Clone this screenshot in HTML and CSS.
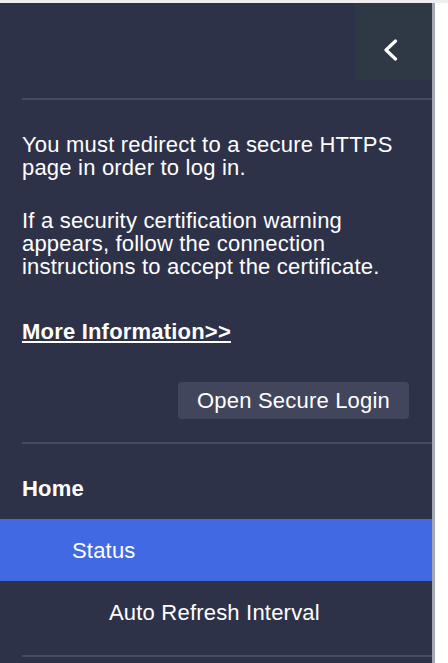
FILE: index.html
```html
<!DOCTYPE html>
<html lang="en">
<head>
<meta charset="utf-8">
<title>Menu</title>
<link rel="stylesheet" href="styles.css">
</head>
<body>
<div class="app">
  <aside class="panel">
    <div class="panel-head">
      <button class="back" aria-label="Collapse">
        <svg width="15" height="22" viewBox="0 0 15 22"><polyline points="12.5,2 3,11 12.5,20" fill="none" stroke="#ffffff" stroke-width="3.2" stroke-linecap="round" stroke-linejoin="round"/></svg>
      </button>
    </div>
    <hr class="divider">
    <div class="notice">
      <p class="p1">You must redirect to a secure HTTPS page in order to log in.</p>
      <p class="p2">If a security certification warning appears, follow the connection instructions to accept the certificate.</p>
      <a class="more" href="#">More Information&gt;&gt;</a>
      <div class="actions"><button class="btn">Open Secure Login</button></div>
    </div>
    <hr class="divider d2">
    <nav class="menu">
      <div class="item lvl0">Home</div>
      <div class="item lvl1 active">Status</div>
      <div class="item lvl2">Auto Refresh Interval</div>
    </nav>
    <hr class="divider">
  </aside>
</div>
</body>
</html>
```
FILE: styles.css
```css
html, body {
  margin: 0;
  padding: 0;
  background: #ffffff;
}
body {
  font-family: "Liberation Sans", Arial, sans-serif;
}
.app {
  border-top: 3px solid #eeeeee;
  height: 660px;
  overflow: hidden;
}
.panel {
  width: 432px;
  height: 660px;
  background: #2e3249;
  border-right: 3px solid #a4a8b3;
  color: #ffffff;
  display: flex;
  flex-direction: column;
  letter-spacing: 0.2px;
}
.panel-head {
  height: 95px;
  display: flex;
  justify-content: flex-end;
  align-items: flex-start;
}
.back {
  width: 77px;
  height: 77px;
  background: #2f3946;
  border: 0;
  padding: 36px 0 0 0;
  margin: 0;
  display: flex;
  justify-content: center;
  align-items: flex-start;
  cursor: pointer;
}
.back svg {
  display: block;
  margin-right: 7px;
}
.divider {
  border: 0;
  margin: 0 0 0 22px;
  height: 2px;
  background: #464b63;
  flex: none;
}
.notice {
  padding: 0 23px 0 22px;
  font-size: 22px;
  line-height: 23px;
}
.notice p {
  margin: 0;
}
.notice .p1 {
  margin-top: 33px;
}
.notice .p2 {
  margin-top: 30px;
}
.more {
  display: inline-block;
  margin-top: 42px;
  font-weight: bold;
  color: #ffffff;
  text-decoration: underline;
}
.actions {
  display: flex;
  justify-content: flex-end;
  margin-top: 39px;
}
.btn {
  font-family: "Liberation Sans", Arial, sans-serif;
  font-size: 22px;
  line-height: 23px;
  letter-spacing: 0.2px;
  padding: 7px 19px;
  background: #41465c;
  color: #ffffff;
  border: 0;
  border-radius: 4px;
}
.d2 {
  margin-top: 23px;
}
.menu {
  margin: 13px 0 12px;
}
.item {
  height: 62px;
  display: flex;
  align-items: center;
  font-size: 22px;
  line-height: 23px;
}
.lvl0 {
  padding-left: 22px;
  font-weight: bold;
}
.lvl1 {
  padding-left: 72px;
}
.lvl2 {
  padding-left: 109px;
}
.active {
  background: #4169e1;
}
```
